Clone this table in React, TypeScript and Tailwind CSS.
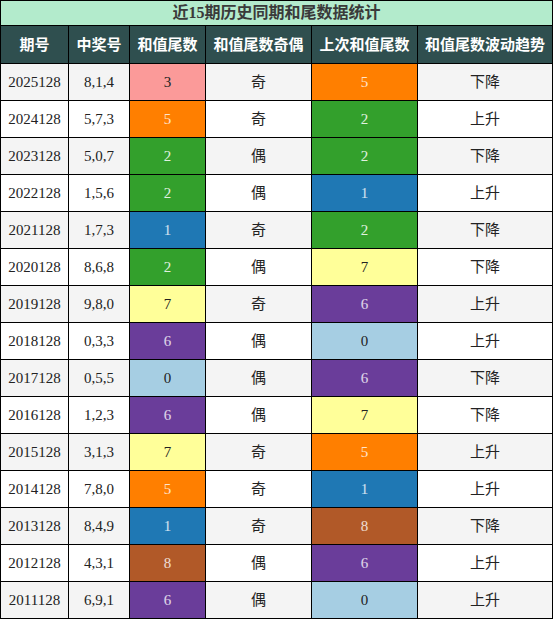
import React from 'react';

const rows: [string, string, number, string, number, string][] = [
  ['2025128', '8,1,4', 3, '奇', 5, '下降'],
  ['2024128', '5,7,3', 5, '奇', 2, '上升'],
  ['2023128', '5,0,7', 2, '偶', 2, '下降'],
  ['2022128', '1,5,6', 2, '偶', 1, '上升'],
  ['2021128', '1,7,3', 1, '奇', 2, '下降'],
  ['2020128', '8,6,8', 2, '偶', 7, '下降'],
  ['2019128', '9,8,0', 7, '奇', 6, '上升'],
  ['2018128', '0,3,3', 6, '偶', 0, '上升'],
  ['2017128', '0,5,5', 0, '偶', 6, '下降'],
  ['2016128', '1,2,3', 6, '偶', 7, '下降'],
  ['2015128', '3,1,3', 7, '奇', 5, '上升'],
  ['2014128', '7,8,0', 5, '奇', 1, '上升'],
  ['2013128', '8,4,9', 1, '奇', 8, '下降'],
  ['2012128', '4,3,1', 8, '偶', 6, '上升'],
  ['2011128', '6,9,1', 6, '偶', 0, '上升'],
];

// tail digit -> cell colour
const tailColor: Record<number, string> = {
  0: 'bg-[#a6cee3] text-[#222]',
  1: 'bg-[#1f78b4] text-white/80',
  2: 'bg-[#33a02c] text-white/85',
  3: 'bg-[#fb9a99] text-[#222]',
  4: 'bg-[#cab2d6] text-[#222]',
  5: 'bg-[#ff7f00] text-white/80',
  6: 'bg-[#6a3d9a] text-white/80',
  7: 'bg-[#ffff99] text-[#222]',
  8: 'bg-[#b15928] text-white/80',
  9: 'bg-[#fdbf6f] text-[#222]',
};

const headers = ['期号', '中奖号', '和值尾数', '和值尾数奇偶', '上次和值尾数', '和值尾数波动趋势'];

export default function App() {
  return (
    <div
      className="w-[553px] bg-black p-px grid grid-cols-[67px_60px_75px_105px_105px_134px] gap-px text-[15px] text-[#222]"
      style={{ fontFamily: '"Liberation Serif", "Noto Sans CJK SC", serif' }}
    >
      {/* Title */}
      <div className="col-span-6 h-[24px] bg-[#b3ebcc] flex items-center justify-center text-[16px] font-bold text-[#3a3a3a]">
        近15期历史同期和尾数据统计
      </div>

      {/* Header */}
      {headers.map((h) => (
        <div
          key={h}
          className="h-[37px] bg-[#2f4f4f] text-white font-bold flex items-center justify-center whitespace-nowrap"
          style={{ fontFamily: '"Noto Sans CJK SC", sans-serif' }}
        >
          {h}
        </div>
      ))}

      {rows.map(([issue, nums, tail, parity, prev, trend], i) => {
        const bg = i % 2 === 0 ? 'bg-[#f4f4f4]' : 'bg-white';
        return (
          <React.Fragment key={issue}>
            <div className={`h-[36px] ${bg} flex items-center justify-center`}>{issue}</div>
            <div className={`h-[36px] ${bg} flex items-center justify-center`}>{nums}</div>
            <div className={`h-[36px] ${tailColor[tail]} flex items-center justify-center`}>{tail}</div>
            <div className={`h-[36px] ${bg} flex items-center justify-center`}>{parity}</div>
            <div className={`h-[36px] ${tailColor[prev]} flex items-center justify-center`}>{prev}</div>
            <div className={`h-[36px] ${bg} flex items-center justify-center`}>{trend}</div>
          </React.Fragment>
        );
      })}
    </div>
  );
}
